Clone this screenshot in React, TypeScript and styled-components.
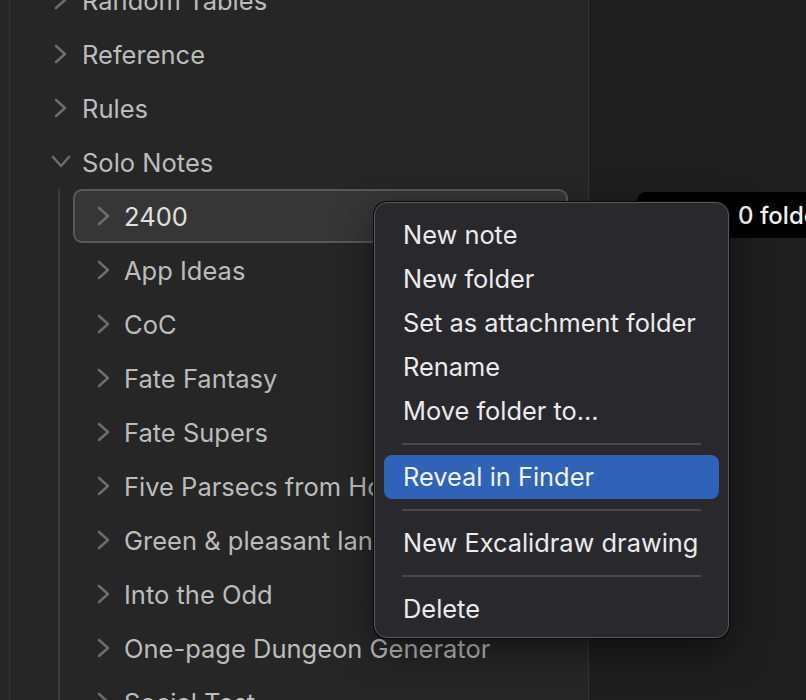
import React from "react";
import styled, { createGlobalStyle } from "styled-components";

const Global = createGlobalStyle`
  html, body { margin: 0; padding: 0; background: #1e1e1e; }
  body { font-family: Inter, "Noto Sans", sans-serif; -webkit-font-smoothing: antialiased; }
`;

const Page = styled.div`
  position: relative;
  display: flex;
  width: 806px;
  height: 700px;
  overflow: hidden;
  background: #1e1e1e;
`;

const Sidebar = styled.aside`
  display: flex;
  width: 588px;
  flex-shrink: 0;
  background: #262626;
  border-right: 1px solid #363636;
`;

const Ribbon = styled.div`
  width: 9px;
  flex-shrink: 0;
  border-right: 1px solid #343434;
`;

const Tree = styled.div`
  flex: 1;
  display: flex;
  flex-direction: column;
  margin-top: -27px;
`;

const Main = styled.main`
  flex: 1;
  background: #1e1e1e;
`;

const TopRow = styled.div`
  display: flex;
  flex-shrink: 0;
  align-items: center;
  height: 54px;
  padding-left: 41px;
  gap: 11px;
  color: #bcbcbc;
  font-size: 25.5px;
  white-space: nowrap;
`;

const Children = styled.div`
  display: flex;
  flex-shrink: 0;
  flex-direction: column;
  margin-left: 48px;
  border-left: 2px solid #3c3c3c;
`;

const ChildRow = styled.div<{ $selected?: boolean }>`
  display: flex;
  flex-shrink: 0;
  align-items: center;
  box-sizing: border-box;
  height: 54px;
  margin-left: 13px;
  margin-right: 20px;
  padding-left: 19px;
  gap: 10px;
  border-radius: 9px;
  border: 2px solid ${(p) => (p.$selected ? "#575757" : "transparent")};
  background: ${(p) => (p.$selected ? "#363636" : "transparent")};
  color: ${(p) => (p.$selected ? "#e0e0e0" : "#bcbcbc")};
  font-size: 25.5px;
  white-space: nowrap;
`;

const ChevronSvg = styled.svg`
  flex-shrink: 0;
  width: 20px;
  height: 20px;
  fill: none;
  stroke: #6c6c6c;
  stroke-width: 2.6;
  stroke-linecap: round;
  stroke-linejoin: round;
`;

const Chevron = ({ open }: { open?: boolean }) => (
  <ChevronSvg viewBox="0 0 20 20">
    {open ? <polyline points="2,5 10,14 18,5" /> : <polyline points="5,2 14,10 5,18" />}
  </ChevronSvg>
);

const Tooltip = styled.div`
  position: absolute;
  left: 637px;
  top: 192px;
  height: 46px;
  width: 300px;
  box-sizing: border-box;
  padding-left: 101px;
  display: flex;
  align-items: center;
  background: #000;
  border-radius: 9px;
  color: #f2f2f2;
  font-size: 24px;
  font-weight: 500;
  white-space: nowrap;
  z-index: 1;
`;

const Menu = styled.div`
  position: absolute;
  left: 374px;
  top: 202px;
  width: 355px;
  box-sizing: border-box;
  padding: 10px 9px 6px 9px;
  display: flex;
  flex-direction: column;
  background: #29282d;
  border: 1px solid #59585d;
  border-radius: 13px;
  box-shadow: 0 0 0 1px #0a0a0a, 0 12px 36px rgba(0, 0, 0, 0.5);
  z-index: 2;
`;

const Item = styled.div<{ $active?: boolean }>`
  display: flex;
  align-items: center;
  height: 44px;
  padding-left: 19px;
  padding-bottom: 1px;
  box-sizing: border-box;
  border-radius: 8px;
  background: ${(p) => (p.$active ? "#3063b8" : "transparent")};
  color: ${(p) => (p.$active ? "#f2f4fa" : "#ebebeb")};
  font-size: 25.4px;
  white-space: nowrap;
`;

const Separator = styled.div`
  height: 2px;
  margin: 10px 18px;
  background: #48474c;
`;

const topBefore = ["Random Tables", "Reference", "Rules"];
const children = [
  "2400",
  "App Ideas",
  "CoC",
  "Fate Fantasy",
  "Fate Supers",
  "Five Parsecs from Home",
  "Green & pleasant land",
  "Into the Odd",
  "One-page Dungeon Generator",
  "Social Test",
];

export default function App() {
  return (
    <>
      <Global />
      <Page>
        <Sidebar>
          <Ribbon />
          <Tree>
            {topBefore.map((t) => (
              <TopRow key={t}>
                <Chevron />
                <span>{t}</span>
              </TopRow>
            ))}
            <TopRow>
              <Chevron open />
              <span>Solo Notes</span>
            </TopRow>
            <Children>
              {children.map((c, i) => (
                <ChildRow key={c} $selected={i === 0}>
                  <Chevron />
                  <span>{c}</span>
                </ChildRow>
              ))}
            </Children>
          </Tree>
        </Sidebar>
        <Main />
        <Tooltip>0 folders, 12 files</Tooltip>
        <Menu>
          <Item>New note</Item>
          <Item>New folder</Item>
          <Item>Set as attachment folder</Item>
          <Item>Rename</Item>
          <Item>Move folder to...</Item>
          <Separator />
          <Item $active>Reveal in Finder</Item>
          <Separator />
          <Item>New Excalidraw drawing</Item>
          <Separator />
          <Item>Delete</Item>
        </Menu>
      </Page>
    </>
  );
}
